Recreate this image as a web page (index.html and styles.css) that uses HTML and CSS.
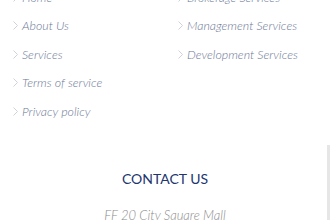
FILE: index.html
```html
<!DOCTYPE html>
<html lang="en">
<head>
    <meta charset="UTF-8">
    <meta name="viewport" content="width=device-width, initial-scale=1.0">
    <title>Footer</title>
    <link rel="stylesheet" href="styles.css">
</head>
<body>
    <div class="footer">
        <div class="links">
            <ul class="link-list">
                <li><svg class="chev" viewBox="0 0 5 9"><path d="M0.5 0.5 L4.5 4.5 L0.5 8.5"/></svg>Home</li>
                <li><svg class="chev" viewBox="0 0 5 9"><path d="M0.5 0.5 L4.5 4.5 L0.5 8.5"/></svg>About Us</li>
                <li><svg class="chev" viewBox="0 0 5 9"><path d="M0.5 0.5 L4.5 4.5 L0.5 8.5"/></svg>Services</li>
                <li><svg class="chev" viewBox="0 0 5 9"><path d="M0.5 0.5 L4.5 4.5 L0.5 8.5"/></svg>Terms of service</li>
                <li><svg class="chev" viewBox="0 0 5 9"><path d="M0.5 0.5 L4.5 4.5 L0.5 8.5"/></svg>Privacy policy</li>
            </ul>
            <ul class="link-list">
                <li><svg class="chev" viewBox="0 0 5 9"><path d="M0.5 0.5 L4.5 4.5 L0.5 8.5"/></svg>Brokerage Services</li>
                <li><svg class="chev" viewBox="0 0 5 9"><path d="M0.5 0.5 L4.5 4.5 L0.5 8.5"/></svg>Management Services</li>
                <li><svg class="chev" viewBox="0 0 5 9"><path d="M0.5 0.5 L4.5 4.5 L0.5 8.5"/></svg>Development Services</li>
            </ul>
        </div>

        <!-- Contact -->
        <div class="contact">
            <h3>CONTACT US</h3>
            <p>FF 20 City Square Mall</p>
        </div>
    </div>
    <div class="scroll-thumb"></div>
</body>
</html>
```

FILE: styles.css
```css
body { margin: 0; background: #fff; font-family: "Lato", "Open Sans", sans-serif; overflow: hidden; }
.footer { margin-top: -17px; }
.links { display: grid; grid-template-columns: 165px 165px; padding-left: 12px; }
.link-list { list-style: none; margin: 0; padding: 0; }
.link-list li { height: 28.5px; display: flex; align-items: center; gap: 4px; font-size: 12.4px; font-style: italic; font-weight: 300; color: #6b7896; }
.chev { width: 5px; height: 9px; fill: none; stroke: #cfd2d8; stroke-width: 1; flex: none; margin-left: 1px; }
.contact { text-align: center; margin-top: 43px; }
.contact h3 { margin: 0; font-size: 14px; line-height: 20px; font-weight: 400; color: #21356e; }
.contact p { margin: 17px 0 0; font-size: 13px; line-height: 18px; font-style: italic; font-weight: 300; color: #8a8a8a; }
.scroll-thumb { position: absolute; left: 327px; top: 145px; width: 3px; height: 75px; background: #e6e6e6; }
```
